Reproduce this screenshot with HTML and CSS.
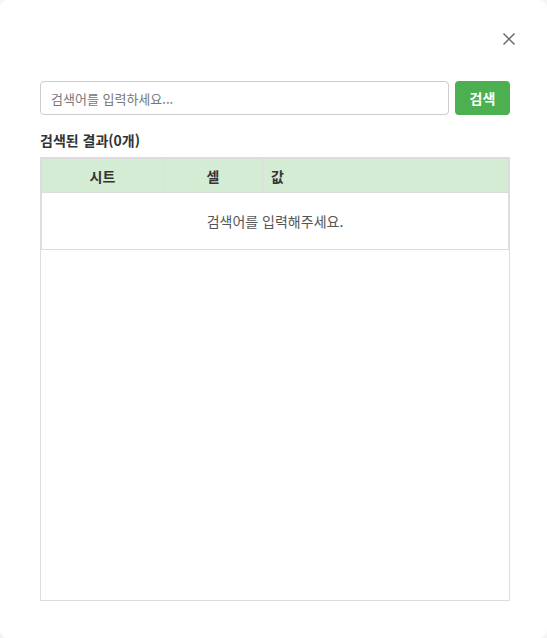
FILE: index.html
```html
<!DOCTYPE html>
<html lang="ko">
<head>
<meta charset="utf-8">
<link rel="stylesheet" href="styles.css">
</head>
<body>
<div class="modal">
  <div class="modal-head">
    <button class="close" aria-label="닫기">
      <svg width="14" height="14" viewBox="0 0 14 14"><path d="M1.5 1.5 L12.5 12.5 M12.5 1.5 L1.5 12.5" stroke="#6b6b6b" stroke-width="1.5" fill="none"/></svg>
    </button>
  </div>
  <div class="search-row">
    <input class="search-input" type="text" placeholder="검색어를 입력하세요...">
    <button class="search-btn">검색</button>
  </div>
  <div class="result-title">검색된 결과(0개)</div>
  <div class="table-wrap">
    <table class="result-table">
      <thead>
        <tr><th class="col-sheet">시트</th><th class="col-cell">셀</th><th class="col-val">값</th></tr>
      </thead>
      <tbody>
        <tr><td class="empty" colspan="3">검색어를 입력해주세요.</td></tr>
      </tbody>
    </table>
  </div>
</div>
</body>
</html>
```

FILE: styles.css
```css
html, body {
  margin: 0;
  padding: 0;
}
body {
  background: #f4f4f4;
  font-family: "Noto Sans CJK KR", "Noto Sans", sans-serif;
  color: #333;
}
.modal {
  box-sizing: border-box;
  width: 547px;
  height: 638px;
  background: #fff;
  border-radius: 8px;
  padding: 0 37px 37px 40px;
  display: flex;
  flex-direction: column;
}
.modal-head {
  display: flex;
  justify-content: flex-end;
  padding-top: 27px;
}
.close {
  width: 24px;
  height: 24px;
  margin-right: -11px;
  padding: 0;
  border: none;
  background: transparent;
  display: flex;
  align-items: center;
  justify-content: center;
  cursor: pointer;
}
.search-row {
  display: flex;
  gap: 6px;
  margin-top: 30px;
}
.search-input {
  flex: 1;
  box-sizing: border-box;
  height: 34px;
  border: 1px solid #ccc;
  border-radius: 4px;
  padding: 0 10px;
  font-family: inherit;
  font-size: 13px;
  color: #333;
  outline: none;
}
.search-input::placeholder {
  color: #777;
}
.search-btn {
  box-sizing: border-box;
  width: 55px;
  height: 34px;
  border: none;
  border-radius: 4px;
  background: #4caf50;
  color: #fff;
  font-family: inherit;
  font-size: 14px;
  font-weight: 700;
  padding: 0;
}
.result-title {
  margin-top: 15px;
  font-size: 14px;
  line-height: 20px;
  font-weight: 700;
  color: #333;
}
.table-wrap {
  flex: 1;
  margin-top: 7px;
  border: 1px solid #ddd;
}
.result-table {
  width: 100%;
  border-collapse: collapse;
  font-size: 14px;
}
.result-table th {
  box-sizing: border-box;
  height: 34px;
  background: #d4ebd4;
  border: 1px solid #dcdcdc;
  font-weight: 700;
  color: #333;
  padding: 0 8px;
}
.col-sheet { width: 122px; text-align: center; }
.col-cell { width: 99px; text-align: center; }
.col-val { text-align: left; }
.result-table td {
  border: 1px solid #ddd;
}
.empty {
  text-align: center;
  padding: 18px 8px;
  line-height: 20px;
  color: #555;
}
```
